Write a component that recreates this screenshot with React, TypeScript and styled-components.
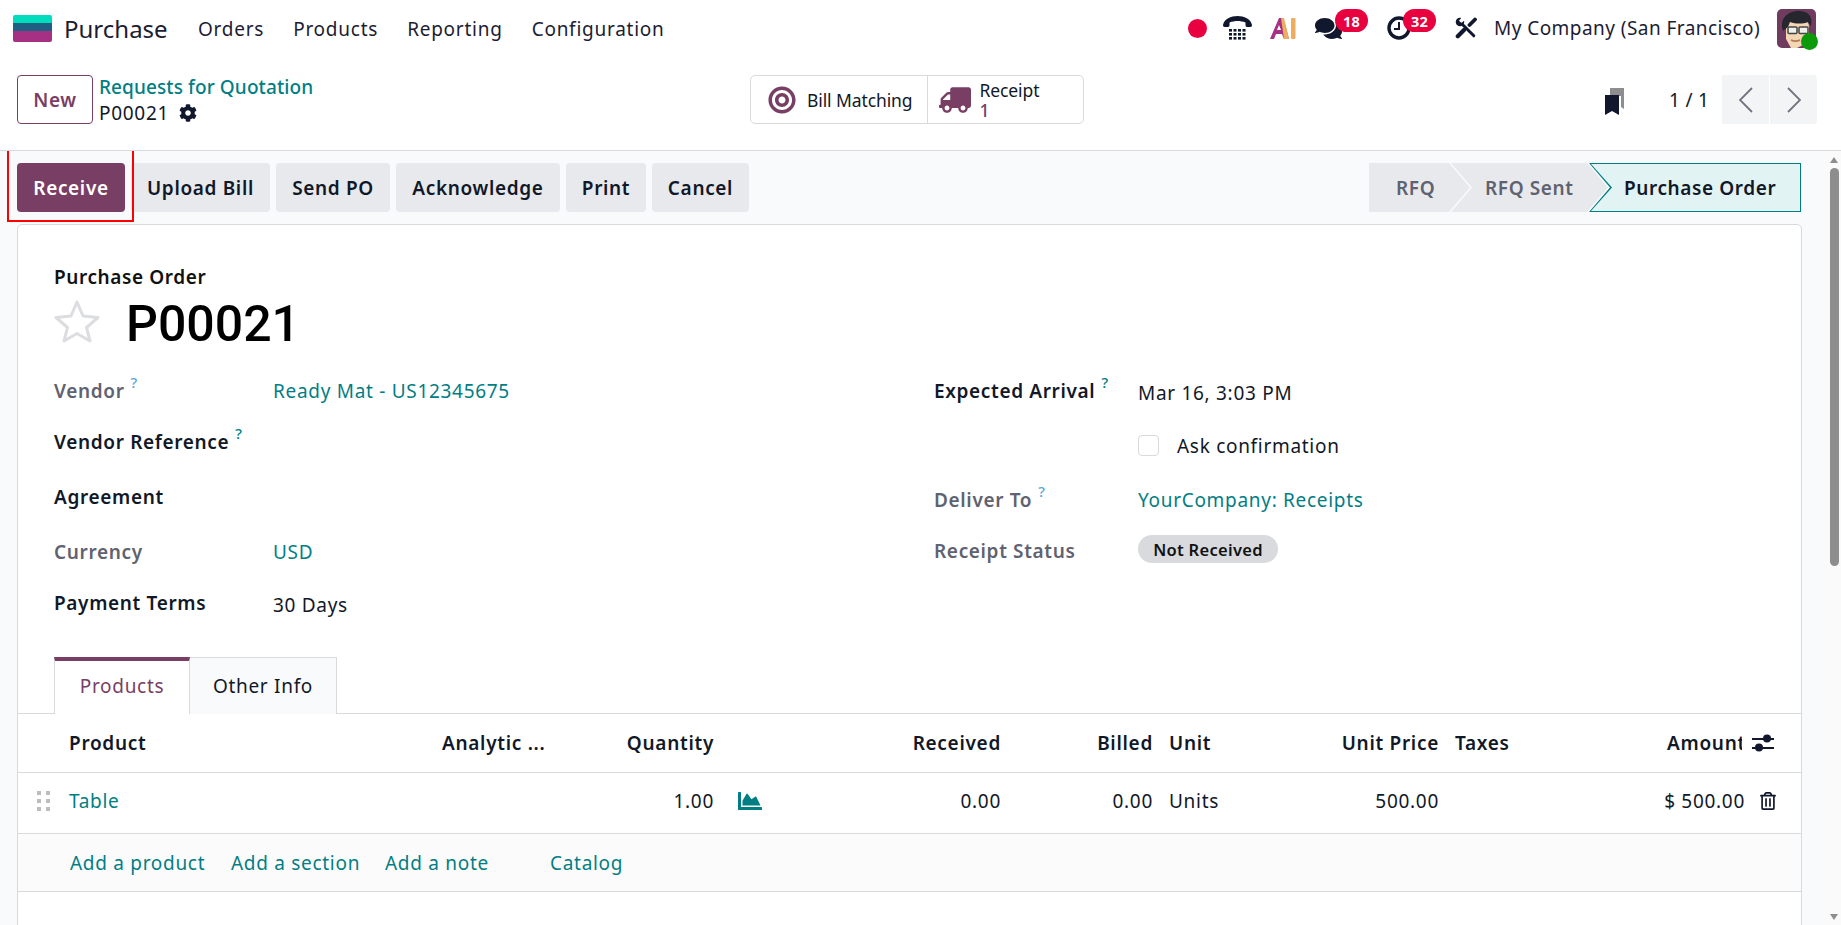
import React from "react";
import styled, { createGlobalStyle } from "styled-components";
import { FaCog, FaBullseye, FaTruck, FaComments, FaChartArea, FaRegTrashAlt } from "react-icons/fa";

const teal = "#017e84";
const plum = "#793e64";
const ink = "#111827";
const line = "#d8dadd";
const muted = "#5f6270";

const Global = createGlobalStyle`
  html, body { margin: 0; height: 100%; overflow: hidden; background: #fff; }
  body { font-family: "Noto Sans", "Open Sans", sans-serif; font-size: 19px; color: ${ink}; letter-spacing: 0.7px; }
  * { box-sizing: border-box; }
`;

const Page = styled.div`position: relative; height: 925px; display: flex; flex-direction: column; overflow: hidden;`;

const TopBar = styled.header`
  height: 54px; flex: none; display: flex; align-items: center; padding: 2px 25px 0 13px;
`;
const Brand = styled.div`
  font-size: 24px; margin-left: 12px; margin-right: 30px; color: #1c1c33; width: 104px; white-space: nowrap; letter-spacing: 0;
`;
const Menu = styled.nav`display: flex; gap: 29px; padding-top: 1px;`;
const MenuItem = styled.span`color: #1c1c33; white-space: nowrap; letter-spacing: 0.75px;`;
const Systray = styled.div`margin-left: auto; display: flex; align-items: center;`;
const TrayIcon = styled.span<{ $w: number; $r: number }>`
  position: relative; display: flex; align-items: center; justify-content: center;
  width: ${(p) => p.$w}px; margin-right: ${(p) => p.$r}px; height: 30px;
`;
const RecDot = styled.i`display: block; width: 19px; height: 19px; border-radius: 50%; background: #e8003f;`;
const Badge = styled.span<{ $left: number }>`
  position: absolute; left: ${(p) => p.$left}px; top: -4px; width: 33px; height: 23px; border-radius: 12px; background: #e8003f;
  color: #fff; font-size: 14.5px; font-weight: 700; display: flex; align-items: center; justify-content: center; letter-spacing: 0.3px;
`;
const Company = styled.span`color: #1c1c33; width: 264px; margin-right: 19px; white-space: nowrap; letter-spacing: 0.45px;`;
const AvatarBox = styled.span`position: relative; display: block; width: 39px; height: 39px;`;
const Online = styled.i`
  position: absolute; right: -2px; bottom: -2px; width: 17px; height: 17px; border-radius: 50%; background: #0a9a0a;
`;

const Control = styled.div`
  height: 96px; flex: none; display: grid; grid-template-columns: 733px 334px 1fr; padding: 21px 24px 0 17px; align-items: start;
`;
const CrumbArea = styled.div`display: flex; gap: 6px;`;
const NewButton = styled.button`
  width: 76px; height: 49px; background: #fff; border: 1px solid ${plum}; border-radius: 4px; color: ${plum};
  font: inherit; font-weight: 600; letter-spacing: 0.6px; padding: 0;
`;
const Crumbs = styled.div`display: flex; flex-direction: column; line-height: 26px; margin-top: -1px;`;
const CrumbLink = styled.span`color: ${teal}; font-weight: 500; white-space: nowrap; letter-spacing: 0.1px;`;
const CrumbCurrent = styled.span`display: flex; align-items: center; gap: 10px;`;

const StatBox = styled.div`
  display: flex; height: 49px; border: 1px solid ${line}; border-radius: 5px; background: #fff;
`;
const StatCell = styled.div<{ $w: number; $gap: number; $pad: number }>`
  width: ${(p) => p.$w}px; display: flex; align-items: center; gap: ${(p) => p.$gap}px; padding-left: ${(p) => p.$pad}px;
  & + & { border-left: 1px solid ${line}; }
`;
const StatText = styled.div`font-size: 17.5px; line-height: 20px; display: flex; flex-direction: column; white-space: nowrap; letter-spacing: -0.1px;`;
const StatNum = styled.span`color: ${plum}; font-weight: 500;`;
const Flip = styled.span`display: flex; transform: scaleX(-1);`;

const PagerArea = styled.div`display: flex; align-items: center; justify-content: flex-end; height: 49px;`;
const BookmarkWrap = styled.span`display: flex; margin-right: 45px; margin-top: 3px;`;
const PagerText = styled.span`margin-right: 13px; white-space: nowrap; width: 40px; letter-spacing: 0.3px;`;
const PagerBtn = styled.span`
  width: 47px; height: 49px; background: #f3f4f6; display: flex; align-items: center; justify-content: center;
  &:first-of-type { border-radius: 4px 0 0 4px; }
  &:last-of-type { border-radius: 0 4px 4px 0; margin-left: 1px; }
`;

const Scroller = styled.main`
  flex: 1; min-height: 0; overflow: hidden; background: #f9fafb; border-top: 1px solid ${line};
`;
const ScrollTrack = styled.div`
  position: absolute; right: 0; top: 151px; bottom: 0; width: 15px; background: #fafafa;
  display: flex; flex-direction: column; align-items: center; padding: 6px 0 5px 1px;
`;
const ArrowUp = styled.i`
  display: block; border-left: 4.5px solid transparent; border-right: 4.5px solid transparent; border-bottom: 6px solid #8d8d8d;
`;
const ArrowDown = styled.i`
  display: block; margin-top: auto; border-left: 4.5px solid transparent; border-right: 4.5px solid transparent; border-top: 6px solid #8d8d8d;
`;
const ScrollThumb = styled.div`width: 9px; height: 398px; margin-top: 5px; border-radius: 5px; background: #8d8d8d;`;

const ActionRow = styled.div`
  position: relative; height: 73px; padding: 12px 25px 0 17px; display: flex; gap: 6px; width: 1826px;
`;
const Highlight = styled.div`
  position: absolute; left: 7px; top: -2px; width: 127px; height: 73px; border: 2px solid #f00; pointer-events: none;
`;
const ActionBtn = styled.button<{ $w: number; $primary?: boolean }>`
  width: ${(p) => p.$w}px; height: 49px; border: 0; border-radius: 4px; font: inherit; font-weight: 600; letter-spacing: 0.65px;
  background: ${(p) => (p.$primary ? plum : "#e7e9ed")}; color: ${(p) => (p.$primary ? "#fff" : ink)}; white-space: nowrap; padding: 0;
`;
const Status = styled.div`margin-left: auto; display: flex; color: #5f6270; font-weight: 600; letter-spacing: 0.6px;`;
const Stage = styled.div<{ $w: number; $notch?: boolean; $pad: number }>`
  width: ${(p) => p.$w}px; height: 49px; background: #e7e9ed; padding-left: ${(p) => p.$pad}px; display: flex; align-items: center; white-space: nowrap;
  margin-left: ${(p) => (p.$notch ? "-19px" : "0")};
  clip-path: ${(p) =>
    p.$notch
      ? "polygon(0 0, calc(100% - 21px) 0, 100% 50%, calc(100% - 21px) 100%, 0 100%, 21px 50%)"
      : "polygon(0 0, calc(100% - 21px) 0, 100% 50%, calc(100% - 21px) 100%, 0 100%)"};
`;
const ActiveStage = styled.div`
  position: relative; width: 212px; height: 49px; margin-left: -19px; background: ${teal}; padding-left: 35px; display: flex; align-items: center;
  color: ${ink}; white-space: nowrap; clip-path: polygon(0 0, 100% 0, 100% 100%, 0 100%, 21px 50%);
  &::before {
    content: ""; position: absolute; inset: 1px 1px 1px 2px; background: #e2f3f3;
    clip-path: polygon(0 0, 100% 0, 100% 100%, 0 100%, 21px 50%);
  }
  span { position: relative; }
`;

const Sheet = styled.section`
  width: 1785px; margin-left: 17px; min-height: 1215px; background: #fff; border: 1px solid ${line}; border-radius: 5px 5px 0 0; padding-top: 39px;
`;
const FormHead = styled.div`padding-left: 36px;`;
const FormLabel = styled.div`line-height: 26px; font-weight: 600; color: #111; letter-spacing: 0.6px;`;
const TitleRow = styled.div`height: 62px; display: flex; align-items: center; gap: 26px;`;
const TitleText = styled.h1`
  margin: 6px 0 0; font-family: Roboto, "Liberation Sans", sans-serif; font-weight: 500; font-size: 50px; line-height: 1; color: #000; letter-spacing: 0;
`;
const Columns = styled.div`display: grid; grid-template-columns: 880px 1fr; padding: 13px 0 0 36px; height: 305px;`;
const Column = styled.div`display: flex; flex-direction: column;`;
const Field = styled.div<{ $h: number; $lw: number }>`
  height: ${(p) => p.$h}px; display: grid; grid-template-columns: ${(p) => p.$lw}px 1fr; align-items: center;
`;
const Label = styled.span<{ $strong?: boolean }>`
  font-weight: 600; color: ${(p) => (p.$strong ? ink : muted)}; white-space: nowrap; letter-spacing: 0.65px;
`;
const Help = styled.sup<{ $soft?: boolean }>`
  font-size: 15px; font-weight: 500; color: ${(p) => (p.$soft ? "#5aa8d8" : teal)}; margin-left: 6px; line-height: 0; position: relative; top: -3px;
`;
const ValueLink = styled.span`color: ${teal}; white-space: nowrap;`;
const ValueText = styled.span<{ $drop?: number }>`white-space: nowrap; padding-top: ${(p) => p.$drop ?? 0}px;`;
const CheckRow = styled.div`display: flex; align-items: center; gap: 18px;`;
const CheckBox = styled.i`display: block; width: 21px; height: 21px; border: 1px solid ${line}; border-radius: 4px; background: #fff;`;
const Pill = styled.span`
  width: 140px; height: 28px; margin-top: -3px; border-radius: 14px; background: #d8dadd; color: #111; font-size: 16.5px; font-weight: 600;
  display: flex; align-items: center; justify-content: center; white-space: nowrap; letter-spacing: 0.3px;
`;

const Tabs = styled.div`display: flex; padding-left: 36px; height: 57px; border-bottom: 1px solid ${line};`;
const Tab = styled.div<{ $active?: boolean; $w: number }>`
  width: ${(p) => p.$w}px; height: 57px; display: flex; align-items: center; justify-content: center;
  ${(p) =>
    p.$active
      ? `background:#fff; color:${plum}; border-left:1px solid ${line}; border-right:1px solid ${line}; border-top:4px solid ${plum}; padding-bottom:3px;`
      : `background:#f9fafb; color:${ink}; border:1px solid ${line}; border-left:0; border-bottom:0;`}
`;

const cols = "51px 373px 118px 154px 146px 141px 152px 147px 139px 201px 105px 56px";
const GridRow = styled.div<{ $h: number; $lift?: number }>`
  display: grid; grid-template-columns: ${cols}; height: ${(p) => p.$h}px; align-items: center; border-bottom: 1px solid ${line};
  padding-bottom: ${(p) => p.$lift ?? 0}px;
`;
const Head = styled.span<{ $right?: boolean; $pad?: number; $clip?: number }>`
  font-weight: 600; color: ${ink}; white-space: nowrap; overflow: hidden; text-align: ${(p) => (p.$right ? "right" : "left")};
  padding-left: ${(p) => p.$pad ?? 0}px; letter-spacing: 0.7px;
`;
const HeadClipped = styled.span`
  display: block; width: 102px; padding-left: 27px; font-weight: 600; white-space: nowrap; overflow: hidden; letter-spacing: 0.7px;
`;
const Cell = styled.span<{ $right?: boolean; $pad?: number; $link?: boolean }>`
  white-space: nowrap; text-align: ${(p) => (p.$right ? "right" : "left")}; padding-left: ${(p) => p.$pad ?? 0}px;
  color: ${(p) => (p.$link ? teal : ink)}; display: block;
`;
const IconCell = styled.span<{ $pad: number }>`display: flex; align-items: center; padding-left: ${(p) => p.$pad}px;`;
const AddRow = styled.div`
  height: 58px; background: #fbfbfb; border-bottom: 1px solid ${line}; display: flex; align-items: center; padding-left: 52px; color: ${teal};
`;
const AddLink = styled.span<{ $w: number }>`width: ${(p) => p.$w}px; white-space: nowrap;`;

const Logo = () => (
  <svg width="39" height="27" viewBox="0 0 39 27">
    <path d="M0 2a2 2 0 0 1 2-2h35a2 2 0 0 1 2 2v8H0z" fill="#00dcbd" />
    <rect y="8" width="39" height="9" fill="#1f5f82" />
    <path d="M0 16h39v9a2 2 0 0 1-2 2H2a2 2 0 0 1-2-2z" fill="#a63084" />
  </svg>
);
const Phone = () => (
  <svg width="29" height="24" viewBox="0 0 29 24" fill="#11182d">
    <path d="M0 9C1 3 8 0 14.500 0S28 3 29 9c0 1-.5 2-1.500 2H24c-1 0-1.500-1-1.500-2V6.500C20 5.500 17 5 14.500 5S9 5.500 6.500 6.500V9c0 1-.5 2-1.500 2H1.500C.5 11 0 10 0 9z" />
    {[13, 17, 21].map((y) =>
      [6, 10.500, 15, 19.500].map((x) => <rect key={`${x}-${y}`} x={x} y={y} width="3" height="2.600" />)
    )}
  </svg>
);
const AiMark = () => (
  <svg width="26" height="21" viewBox="0 0 26 21">
    <path d="M9 0h4l2 6 4 15h-5l-2-5H6l-2 5H0z" fill="#a63084" />
    <path d="M7 12l2-5 2 5z" fill="#fff" />
    <path d="M11 0h3l5 21h-5z" fill="#ecae5e" />
    <rect x="21" y="0" width="4.500" height="21" rx="1" fill="#ecae5e" />
  </svg>
);
const ClockIcon = () => (
  <svg width="24" height="24" viewBox="0 0 24 24" fill="none" stroke="#11182d">
    <circle cx="12" cy="12" r="10" strokeWidth="3.400" />
    <path d="M12 6v7H7" strokeWidth="2" />
  </svg>
);
const ToolsIcon = () => (
  <svg width="22" height="22" viewBox="0 0 22 22" fill="none" stroke="#11182d" strokeLinecap="butt">
    <path d="M20 2.500 14.500 8" strokeWidth="3.800" strokeLinecap="round" />
    <path d="M9 13 2.800 19.200" strokeWidth="4.200" strokeLinecap="round" />
    <path d="M7 7 18.800 18.800" strokeWidth="3" strokeLinecap="round" />
    <path d="M1 3.500C.2 6 1.500 9 5 9.200 8 9.400 9.800 6.500 9 3.800L6.500 6 4 3.800 6.200 1C4 .2 2 1 1 3.500z" fill="#11182d" stroke="none" />
  </svg>
);
const Avatar = () => (
  <svg width="39" height="39" viewBox="0 0 39 39">
    <rect width="39" height="39" rx="5" fill="#6f3c60" />
    <path d="M9 30V18c0-7 5-9 11-9s12 2 12 9v8c0 6-4 9-8 11l-4 2h-6z" fill="#f3d6b4" />
    <path d="M6 22C2 9 11 2 22 2c9 0 14 5 12 15l-3-4c-5 2-12 2-18 0l-2 5z" fill="#26262e" />
    <rect x="11" y="18" width="9" height="6.500" rx="1" fill="#eef0ee" stroke="#444" strokeWidth="1.500" />
    <rect x="22" y="18" width="9" height="6.500" rx="1" fill="#eef0ee" stroke="#444" strokeWidth="1.500" />
    <path d="M14 31c3 1.500 6 1.500 9 0" stroke="#b4785a" strokeWidth="1.500" fill="none" />
  </svg>
);
const Bookmarks = () => (
  <svg width="19" height="27" viewBox="0 0 19 27">
    <path d="M5 0h14v21l-3-2V4H5z" fill="#8e8e8e" />
    <rect x="5" y="0" width="14" height="8" fill="#8e8e8e" />
    <path d="M0 7h14v20l-7-4-7 4z" fill="#11182d" />
  </svg>
);
const Chevron = ({ left }: { left?: boolean }) => (
  <svg width="14" height="26" viewBox="0 0 14 26" fill="none" stroke="#71757f" strokeWidth="1.800">
    <path d={left ? "M13 1 1 13l12 12" : "M1 1l12 12L1 25"} />
  </svg>
);
const Star = () => (
  <svg width="46" height="44" viewBox="0 0 46 44">
    <path d="M23 3l6 14 15 1.500-11.500 10L36 42l-13-7.500L10 42l3.500-13.500L2 18.500 17 17z" fill="none" stroke="#dcdde1" strokeWidth="3" strokeLinejoin="round" />
  </svg>
);
const Drag = () => (
  <svg width="13" height="20" viewBox="0 0 13 20" fill="#bdbdbd">
    {[0, 8, 16].map((y) => [0, 9].map((x) => <rect key={`${x}${y}`} x={x} y={y} width="4" height="4" />))}
  </svg>
);
const Sliders = () => (
  <svg width="22" height="18" viewBox="0 0 22 18" fill="#11182d">
    <rect y="4" width="22" height="2" />
    <circle cx="15" cy="4.500" r="4" />
    <rect y="13" width="22" height="2" />
    <circle cx="7" cy="13.500" r="4" />
  </svg>
);

export default function App() {
  return (
    <Page>
      <Global />
      <TopBar>
        <Logo />
        <Brand>Purchase</Brand>
        <Menu>
          {["Orders", "Products", "Reporting", "Configuration"].map((m) => (
            <MenuItem key={m}>{m}</MenuItem>
          ))}
        </Menu>
        <Systray>
          <TrayIcon $w={19} $r={16}><RecDot /></TrayIcon>
          <TrayIcon $w={29} $r={18}><Phone /></TrayIcon>
          <TrayIcon $w={26} $r={19}><AiMark /></TrayIcon>
          <TrayIcon $w={27} $r={45}>
            <FaComments size={27} color="#11182d" />
            <Badge $left={20}>18</Badge>
          </TrayIcon>
          <TrayIcon $w={24} $r={44}>
            <ClockIcon />
            <Badge $left={16}>32</Badge>
          </TrayIcon>
          <TrayIcon $w={22} $r={17}><ToolsIcon /></TrayIcon>
          <Company>My Company (San Francisco)</Company>
          <AvatarBox>
            <Avatar />
            <Online />
          </AvatarBox>
        </Systray>
      </TopBar>

      <Control>
        <CrumbArea>
          <NewButton>New</NewButton>
          <Crumbs>
            <CrumbLink>Requests for Quotation</CrumbLink>
            <CrumbCurrent>P00021 <FaCog size={18} color="#11182d" /></CrumbCurrent>
          </Crumbs>
        </CrumbArea>
        <StatBox>
          <StatCell $w={177} $gap={11} $pad={17}>
            <FaBullseye size={28} color={plum} />
            <StatText>Bill Matching</StatText>
          </StatCell>
          <StatCell $w={156} $gap={8} $pad={11}>
            <Flip><FaTruck size={32} color={plum} /></Flip>
            <StatText>
              <span>Receipt</span>
              <StatNum>1</StatNum>
            </StatText>
          </StatCell>
        </StatBox>
        <PagerArea>
          <BookmarkWrap><Bookmarks /></BookmarkWrap>
          <PagerText>1 / 1</PagerText>
          <PagerBtn><Chevron left /></PagerBtn>
          <PagerBtn><Chevron /></PagerBtn>
        </PagerArea>
      </Control>

      <Scroller>
        <ActionRow>
          <ActionBtn $w={108} $primary>Receive</ActionBtn>
          <ActionBtn $w={139}>Upload Bill</ActionBtn>
          <ActionBtn $w={114}>Send PO</ActionBtn>
          <ActionBtn $w={164}>Acknowledge</ActionBtn>
          <ActionBtn $w={80}>Print</ActionBtn>
          <ActionBtn $w={97}>Cancel</ActionBtn>
          <Highlight />
          <Status>
            <Stage $w={101} $pad={27}>RFQ</Stage>
            <Stage $w={157} $notch $pad={34}>RFQ Sent</Stage>
            <ActiveStage><span>Purchase Order</span></ActiveStage>
          </Status>
        </ActionRow>

        <Sheet>
          <FormHead>
            <FormLabel>Purchase Order</FormLabel>
            <TitleRow>
              <Star />
              <TitleText>P00021</TitleText>
            </TitleRow>
          </FormHead>

          <Columns>
            <Column>
              <Field $h={52} $lw={219}>
                <Label>Vendor<Help $soft>?</Help></Label>
                <ValueLink>Ready Mat - US12345675</ValueLink>
              </Field>
              <Field $h={50} $lw={219}><Label $strong>Vendor Reference<Help>?</Help></Label><span /></Field>
              <Field $h={60} $lw={219}><Label $strong>Agreement</Label><span /></Field>
              <Field $h={50} $lw={219}><Label>Currency</Label><ValueLink>USD</ValueLink></Field>
              <Field $h={52} $lw={219}><Label $strong>Payment Terms</Label><ValueText $drop={4}>30 Days</ValueText></Field>
            </Column>
            <Column>
              <Field $h={52} $lw={204}>
                <Label $strong>Expected Arrival<Help>?</Help></Label>
                <ValueText $drop={3}>Mar 16, 3:03 PM</ValueText>
              </Field>
              <Field $h={57} $lw={204}>
                <span />
                <CheckRow><CheckBox /><span>Ask confirmation</span></CheckRow>
              </Field>
              <Field $h={52} $lw={204}>
                <Label>Deliver To<Help $soft>?</Help></Label>
                <ValueLink>YourCompany: Receipts</ValueLink>
              </Field>
              <Field $h={49} $lw={204}>
                <Label>Receipt Status</Label>
                <Pill>Not Received</Pill>
              </Field>
            </Column>
          </Columns>

          <Tabs>
            <Tab $active $w={136}>Products</Tab>
            <Tab $w={147}>Other Info</Tab>
          </Tabs>

          <GridRow $h={59}>
            <span />
            <Head>Product</Head>
            <Head>Analytic ...</Head>
            <Head $right>Quantity</Head>
            <span />
            <Head $right>Received</Head>
            <Head $right>Billed</Head>
            <Head $pad={16}>Unit</Head>
            <Head $right>Unit Price</Head>
            <Head $pad={16}>Taxes</Head>
            <HeadClipped>Amount</HeadClipped>
            <IconCell $pad={7}><Sliders /></IconCell>
          </GridRow>
          <GridRow $h={61} $lift={4}>
            <IconCell $pad={19}><Drag /></IconCell>
            <Cell $link>Table</Cell>
            <span />
            <Cell $right>1.00</Cell>
            <IconCell $pad={24}><FaChartArea size={24} color={teal} /></IconCell>
            <Cell $right>0.00</Cell>
            <Cell $right>0.00</Cell>
            <Cell $pad={16}>Units</Cell>
            <Cell $right>500.00</Cell>
            <span />
            <Cell $right>$ 500.00</Cell>
            <IconCell $pad={14}><FaRegTrashAlt size={18} color="#11182d" /></IconCell>
          </GridRow>
          <AddRow>
            <AddLink $w={161}>Add a product</AddLink>
            <AddLink $w={154}>Add a section</AddLink>
            <AddLink $w={165}>Add a note</AddLink>
            <AddLink $w={80}>Catalog</AddLink>
          </AddRow>
        </Sheet>
      </Scroller>

      <ScrollTrack>
        <ArrowUp />
        <ScrollThumb />
        <ArrowDown />
      </ScrollTrack>
    </Page>
  );
}
